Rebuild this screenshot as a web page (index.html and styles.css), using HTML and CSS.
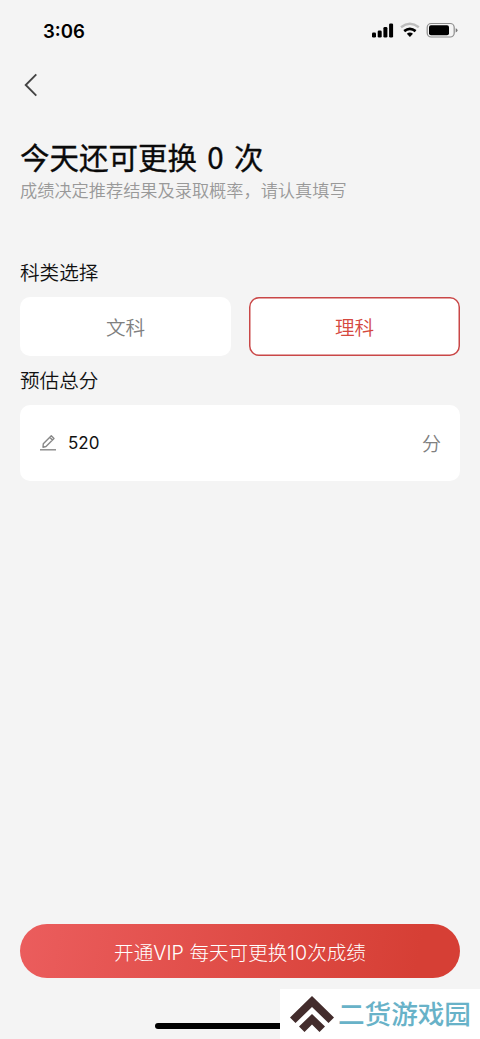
FILE: index.html
```html
<!DOCTYPE html>
<html lang="zh-CN">
<head>
<meta charset="utf-8">
<title>更换成绩</title>
<link rel="stylesheet" href="styles.css">
</head>
<body>
<div class="screen">
  <header class="status">
    <span class="time">3:06</span>
    <svg class="status-icons" width="88" height="20" viewBox="0 0 88 20">
      <g fill="#000">
        <rect x="2" y="12.500" width="4" height="5" rx="1.300"/>
        <rect x="7.700" y="10.500" width="4" height="7" rx="1.300"/>
        <rect x="13.400" y="7" width="4" height="10.500" rx="1.300"/>
        <rect x="19.100" y="3.500" width="4" height="14" rx="1.300"/>
        <path d="M36.800 13.800Q39.900 11.400 43 13.800L39.900 17Z"/>
      </g>
      <path d="M31 7.200Q39.900 0.400 48.800 7.200" fill="none" stroke="#bdbdbd" stroke-width="2.400"/>
      <path d="M34.200 11.100Q39.900 6.600 45.600 11.100" fill="none" stroke="#000" stroke-width="2.700"/>
      <rect x="57.200" y="3.500" width="27" height="13.500" rx="4" fill="none" stroke="#8c8c8c" stroke-width="1.200"/>
      <rect x="59" y="5.300" width="20" height="10" rx="2" fill="#000"/>
      <path d="M85.700 8.200Q87.500 8.800 87.500 10.300T85.700 12.400Z" fill="#777"/>
    </svg>
  </header>
  <nav class="nav">
    <svg width="14" height="24" viewBox="0 0 14 24" fill="none" stroke="#444" stroke-width="1.900"><path d="M12.300 1.300 1.700 12 12.300 22.700"/></svg>
  </nav>
  <main class="content">
    <h1 class="title">今天还可更换 <span class="count">0</span> 次</h1>
    <p class="subtitle">成绩决定推荐结果及录取概率，请认真填写</p>
    <h2 class="label">科类选择</h2>
    <div class="options">
      <div class="option">文科</div>
      <div class="option selected">理科</div>
    </div>
    <h2 class="label label-score">预估总分</h2>
    <div class="field">
      <svg class="pencil" width="16" height="18" viewBox="0 0 16 18" fill="none" stroke="#888" stroke-width="1.400" stroke-linejoin="round"><path d="M3 13.200 3.300 9.800 11.300 1.700 14 4.400 6 12.500ZM9.700 3.300 12.400 6"/><path d="M0 15.800H16"/></svg>
      <span class="score">520</span>
      <span class="unit">分</span>
    </div>
  </main>
  <div class="cta">开通VIP 每天可更换10次成绩</div>
  <div class="home"></div>
  <div class="watermark">
    <svg width="44" height="38" viewBox="0 0 44 38" fill="#432c2c"><path d="M22 1 44 22.500 38.500 28 22 12 5.500 28 0 22.500Z"/><path d="M22 19 35 31.500 29.500 37 22 29.500 14.500 37 9 31.500Z"/></svg>
    <span class="brand">二货游戏园</span>
  </div>
</div>
</body>
</html>
```
FILE: styles.css
```css
* { box-sizing: border-box; }
body {
  margin: 0;
  background: #f4f4f4;
  font-family: Inter, "Noto Sans CJK SC", sans-serif;
  color: #111;
}
.screen {
  position: relative;
  width: 480px;
  height: 1039px;
  display: flex;
  flex-direction: column;
  overflow: hidden;
}
.status {
  height: 60px;
  padding: 0 22px 0 43px;
  display: flex;
  align-items: center;
  justify-content: space-between;
}
.time {
  padding-top: 2px;
  font-size: 18.6px;
  font-weight: 600;
  line-height: 24px;
  color: #000;
}
.nav {
  height: 49px;
  padding: 0 24px;
  display: flex;
  align-items: center;
}
.content { padding: 27px 20px 0; }
.title {
  margin: 0;
  font-size: 29.5px;
  font-weight: 400;
  -webkit-text-stroke: 0.35px #0a0a0a;
  line-height: 40px;
  color: #0a0a0a;
  white-space: pre;
}
.count { font-family: "Noto Sans CJK SC", sans-serif; padding: 0 2px; }
.subtitle {
  margin: 0;
  font-size: 17.2px;
  font-weight: 350;
  line-height: 26px;
  color: #999;
  white-space: nowrap;
}
.label {
  margin: 55px 0 0;
  font-size: 19.6px;
  font-weight: 350;
  line-height: 28px;
}
.options {
  margin-top: 10px;
  display: grid;
  grid-template-columns: 1fr 1fr;
  gap: 18px;
}
.option {
  height: 59px;
  padding-bottom: 1px;
  border-radius: 10px;
  background: #fff;
  display: flex;
  align-items: center;
  justify-content: center;
  font-size: 19.6px;
  font-weight: 350;
  color: #808080;
}
.selected {
  box-shadow: inset 0 0 0 1.5px #c94747;
  color: #d5493f;
}
.label-score { margin-top: 11px; }
.field {
  margin-top: 10px;
  height: 76px;
  padding: 0 19px 0 20px;
  border-radius: 10px;
  background: #fff;
  display: flex;
  align-items: center;
}
.pencil { margin-bottom: 1px; }
.score { margin-left: 12px; font-size: 17px; }
.unit {
  margin-left: auto;
  padding-bottom: 1px;
  font-size: 19px;
  font-weight: 350;
  color: #808080;
}
.cta {
  margin: auto 20px 0;
  height: 54px;
  border-radius: 27px;
  background: linear-gradient(100deg, #eb5d5d, #d63f35 90%);
  color: #fff;
  font-size: 19.6px;
  font-weight: 300;
  display: flex;
  align-items: center;
  justify-content: center;
}
.home {
  width: 170px;
  height: 6px;
  margin: 45px auto 10px;
  border-radius: 3px;
  background: #000;
}
.watermark {
  position: absolute;
  right: 0;
  bottom: 0;
  width: 200px;
  height: 50px;
  padding-left: 10px;
  background: #fff;
  display: flex;
  align-items: center;
}
.brand {
  margin-left: 4px;
  font-size: 26.6px;
  font-weight: 500;
  line-height: 40px;
  color: #68b2c8;
}
```
